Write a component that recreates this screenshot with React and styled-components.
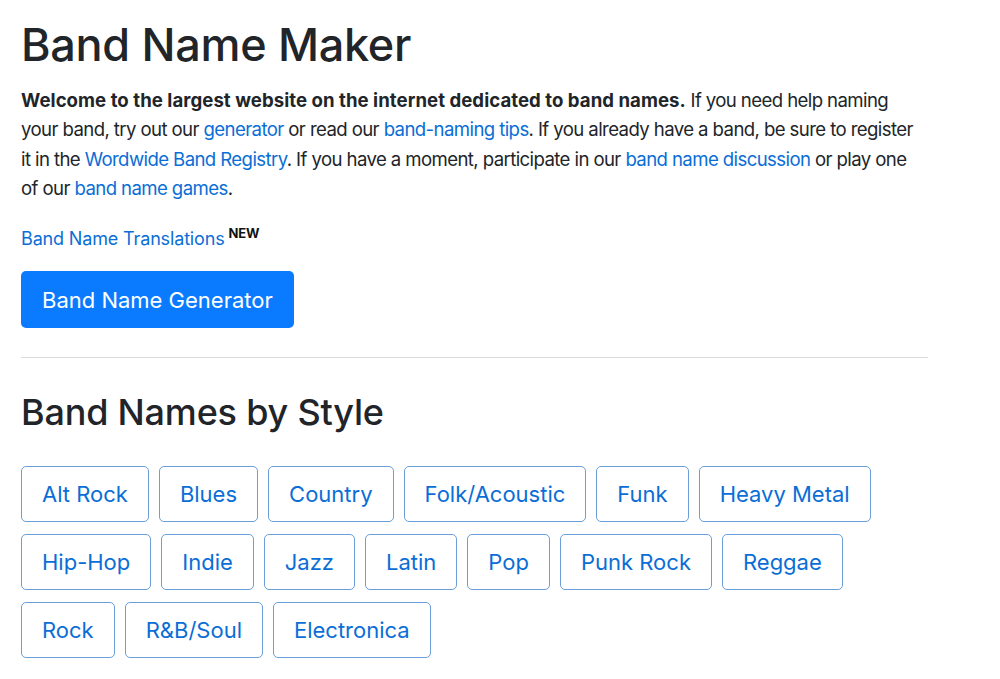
import React from 'react'
import styled, { createGlobalStyle } from 'styled-components'

const GlobalStyle = createGlobalStyle`
  html, body { margin: 0; padding: 0; background: #fff; }
  body {
    font-family: Inter, "Liberation Sans", Arial, sans-serif;
    color: #212529;
  }
`

const styles = [
  ['Alt Rock', 'Blues', 'Country', 'Folk/Acoustic', 'Funk', 'Heavy Metal'],
  ['Hip-Hop', 'Indie', 'Jazz', 'Latin', 'Pop', 'Punk Rock', 'Reggae'],
  ['Rock', 'R&B/Soul', 'Electronica'],
]

const Page = styled.main`
  width: 907px;
  padding: 17px 0 0 21px;
`

const Title = styled.h1`
  margin: 0 0 13px;
  font-size: 45px;
  font-weight: 500;
  line-height: 56px;
  letter-spacing: -0.3px;
`

// the reference breaks its lines at fixed words, so the breaks are kept
const Intro = styled.p`
  width: 950px;
  margin: 0 0 16px;
  font-size: 18.6px;
  line-height: 29.3px;
  letter-spacing: -0.6px;

  strong { letter-spacing: 0.05px; }
`

const Link = styled.a`
  color: #0a6ed6;
  text-decoration: none;
`

const Translations = styled.p`
  margin: 0 0 18px;
  font-size: 18px;
  line-height: 28px;
  letter-spacing: -0.15px;
`

const NewTag = styled.sup`
  font-size: 13px;
  font-weight: 700;
  margin-left: 4px;
  color: #111;
`

const PrimaryButton = styled.a`
  display: inline-flex;
  align-items: center;
  height: 57px;
  padding: 0 21px;
  background: #0a7bff;
  color: #fff;
  border-radius: 5px;
  font-size: 22px;
  text-decoration: none;
`

const Rule = styled.hr`
  margin: 29px 0 32px;
  border: 0;
  border-top: 1px solid #dcdcdc;
`

const SubTitle = styled.h2`
  margin: 0 0 32px;
  font-size: 36px;
  font-weight: 500;
  line-height: 44px;
  letter-spacing: -0.2px;
`

const Grid = styled.div`
  display: flex;
  flex-direction: column;
  gap: 12px;
`

const Row = styled.div`
  display: flex;
  gap: 10px;
`

const StyleButton = styled.a`
  display: inline-flex;
  align-items: center;
  height: 56px;
  box-sizing: border-box;
  padding: 0 20px;
  border: 1px solid #6a9fd9;
  border-radius: 5px;
  color: #0a6ed6;
  font-size: 22px;
  text-decoration: none;
`

const App = () => {
  return (
    <Page>
      <GlobalStyle />
      <Title>Band Name Maker</Title>
      <Intro>
        <strong>Welcome to the largest website on the internet dedicated to band names.</strong>{' '}
        If you need help naming<br />
        your band, try out our <Link href="#">generator</Link> or read
        our <Link href="#">band-naming tips</Link>. If you already have a band, be sure to register<br />
        it in the <Link href="#">Wordwide Band Registry</Link>. If you have a moment, participate in
        our <Link href="#">band name discussion</Link> or play one<br />
        of our <Link href="#">band name games</Link>.
      </Intro>
      <Translations>
        <Link href="#">Band Name Translations</Link>
        <NewTag>NEW</NewTag>
      </Translations>
      <PrimaryButton href="#">Band Name Generator</PrimaryButton>
      <Rule />
      <SubTitle>Band Names by Style</SubTitle>
      <Grid>
        {styles.map((row, rowIndex) => (
          <Row key={`row-${rowIndex}`}>
            {row.map(name => (
              <StyleButton key={name} href="#">{name}</StyleButton>
            ))}
          </Row>
        ))}
      </Grid>
    </Page>
  )
}

export default App
